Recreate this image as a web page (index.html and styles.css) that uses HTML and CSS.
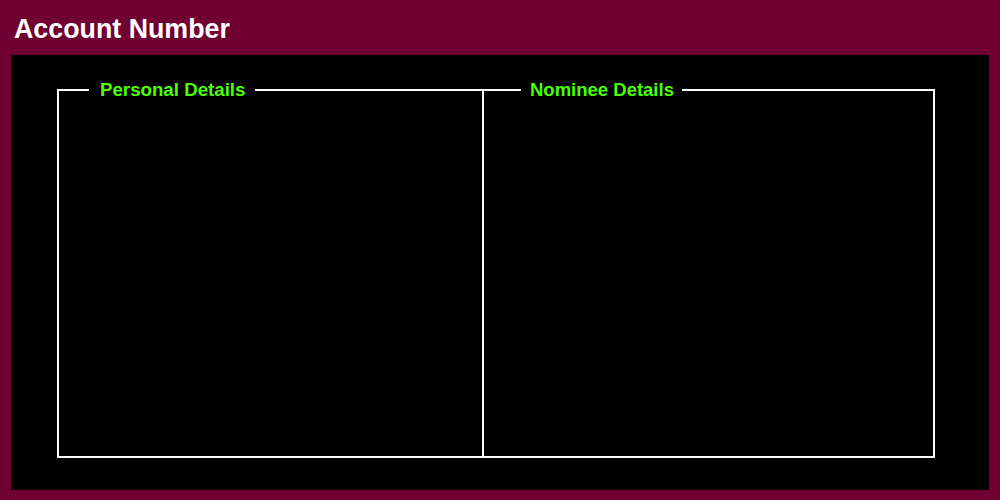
FILE: index.html
```html
<!DOCTYPE html>
<html lang="en">
<head>
<meta charset="utf-8">
<title>Account Number</title>
<link rel="stylesheet" href="styles.css">
</head>
<body>
<header class="topbar">
  <h1 class="title">Account Number</h1>
</header>
<main class="panel">
  <div class="groups">
    <fieldset class="group group-left">
      <legend class="group-legend legend-left">Personal Details</legend>
    </fieldset>
    <fieldset class="group group-right">
      <legend class="group-legend legend-right">Nominee Details</legend>
    </fieldset>
  </div>
</main>
</body>
</html>
```
FILE: styles.css
```css
html, body {
  margin: 0;
  padding: 0;
}
body {
  width: 1000px;
  height: 500px;
  background: #700032;
  font-family: "Liberation Sans", Arial, sans-serif;
  overflow: hidden;
}
.topbar {
  height: 55px;
  box-sizing: border-box;
  padding: 13px 0 0 14px;
}
.title {
  margin: 0;
  color: #ffffff;
  font-size: 26.8px;
  line-height: 32px;
  font-weight: bold;
}
.panel {
  margin: 0 11px;
  height: 435px;
  background: #000000;
  box-sizing: border-box;
  padding: 24px 0 0 46px;
}
.groups {
  display: flex;
}
.group {
  margin: 0;
  padding: 0;
  min-width: 0;
  height: 379px;
  box-sizing: border-box;
  border: 2px solid #ffffff;
}
.group-left {
  width: 427px;
}
.group-right {
  width: 451px;
  border-left: none;
}
.group-legend {
  color: #4cff00;
  font-weight: bold;
  font-size: 18.7px;
  line-height: 22px;
  padding: 0 10px;
}
.legend-left {
  margin-left: 30px;
  padding: 0 10px 0 11px;
}
.legend-right {
  margin-left: 37px;
  padding: 0 8px 0 9px;
  font-size: 18.5px;
}
```
